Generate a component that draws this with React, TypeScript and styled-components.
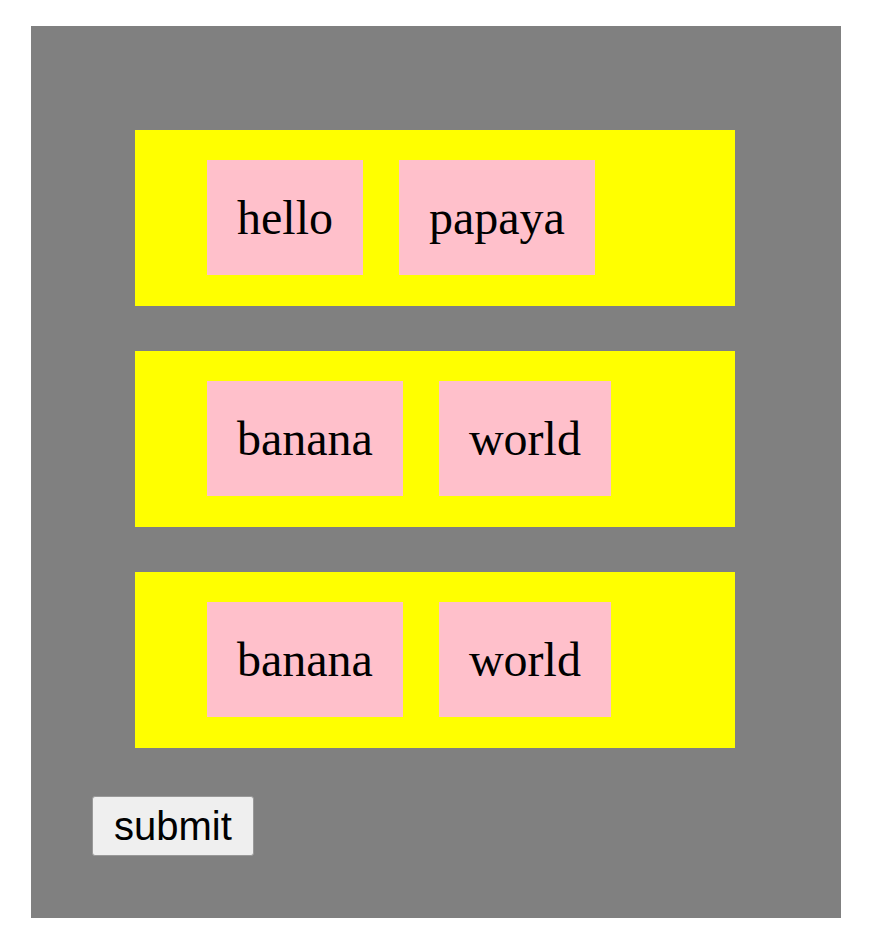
import React from "react";
import styled, { createGlobalStyle } from "styled-components";

const Global = createGlobalStyle`
  html, body { margin: 0; padding: 0; background: #ffffff; }
  body { font-family: "Liberation Serif", "Times New Roman", serif; }
`;

const Page = styled.div`
  padding: 26px 0 0 31px;
`;

const Panel = styled.div`
  width: 810px;
  box-sizing: border-box;
  background: #808080;
  padding: 104px 0 62px 61px;
  display: flex;
  flex-direction: column;
  align-items: flex-start;
`;

const List = styled.div`
  display: flex;
  flex-direction: column;
  gap: 45px;
  margin-left: 43px;
  margin-bottom: 48px;
`;

const Row = styled.div`
  width: 600px;
  height: 176px;
  box-sizing: border-box;
  background: #ffff00;
  padding: 30px 0 0 72px;
  display: flex;
  align-items: flex-start;
  gap: 36px;
`;

const Chip = styled.div`
  background: #ffc0cb;
  height: 115px;
  box-sizing: border-box;
  padding: 0 30px;
  display: flex;
  align-items: center;
  justify-content: center;
  font-family: "Liberation Serif", "Times New Roman", serif;
  font-size: 48px;
  color: #000;
`;

const Submit = styled.button`
  height: 60px;
  padding: 0 21px;
  box-sizing: border-box;
  background: #efefef;
  border: 1px solid #999999;
  border-radius: 3px;
  font-family: "Liberation Sans", Arial, sans-serif;
  font-size: 40px;
  color: #000;
  cursor: pointer;
`;

const rows = [
  ["hello", "papaya"],
  ["banana", "world"],
  ["banana", "world"],
];

export default function App() {
  return (
    <>
      <Global />
      <Page>
        <Panel>
          <List>
            {rows.map((r, i) => (
              <Row key={i}>
                {r.map((t, j) => (
                  <Chip key={j}>{t}</Chip>
                ))}
              </Row>
            ))}
          </List>
          <Submit>submit</Submit>
        </Panel>
      </Page>
    </>
  );
}
